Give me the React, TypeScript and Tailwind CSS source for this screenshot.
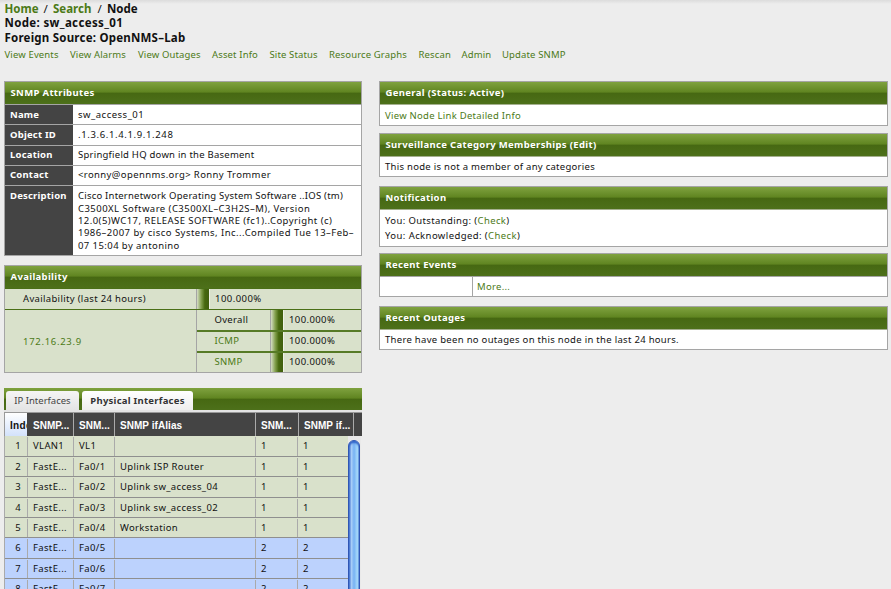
import type { ReactNode } from "react";
import { clsx } from "clsx";

const LINK = "text-[#4c7a17]";
const GLOSS =
  "bg-[linear-gradient(to_bottom,#7fa23f_0%,#5f8420_47%,#466812_49%,#4d701a_100%)]";

function PanelTitle({ children, className }: { children: ReactNode; className?: string }) {
  return (
    <h3
      className={clsx(
        "flex shrink-0 items-center pl-[5.5px] text-[9.5px] font-bold tracking-[0.34px] text-white",
        GLOSS,
        className,
      )}
    >
      {children}
    </h3>
  );
}

function Panel({
  title,
  className,
  bodyClassName = "pt-[1px]",
  children,
}: {
  title: string;
  className: string;
  bodyClassName?: string;
  children: ReactNode;
}) {
  return (
    <section className={clsx("flex flex-col border border-[#a5a5a5] bg-white", className)}>
      <PanelTitle className="h-[22px] pt-[1px]">{title}</PanelTitle>
      <div className={clsx("flex grow flex-col justify-center border-t border-[#a5b08f] pl-[5px]", bodyClassName)}>
        {children}
      </div>
    </section>
  );
}

const menu = [
  { label: "View Events", width: "w-[65.5px]" },
  { label: "View Alarms", width: "w-[68px]" },
  { label: "View Outages", width: "w-[74px]" },
  { label: "Asset Info", width: "w-[57.5px]" },
  { label: "Site Status", width: "w-[59.5px]" },
  { label: "Resource Graphs", width: "w-[89.5px]" },
  { label: "Rescan", width: "w-[43px]" },
  { label: "Admin", width: "w-[40.5px]" },
  { label: "Update SNMP", width: "w-[70px]" },
];

const attributes = [
  { name: "Name", value: "sw_access_01", tracking: "tracking-[0.5px]" },
  { name: "Object ID", value: ".1.3.6.1.4.1.9.1.248", tracking: "tracking-[0.64px]" },
  { name: "Location", value: "Springfield HQ down in the Basement", tracking: "tracking-[0.24px]" },
  { name: "Contact", value: "<ronny@opennms.org> Ronny Trommer", tracking: "tracking-[0.39px]" },
];

const description = [
  { text: "Cisco Internetwork Operating System Software ..IOS (tm)", tracking: "tracking-[0.22px]" },
  { text: "C3500XL Software (C3500XL–C3H2S–M), Version", tracking: "tracking-[0.46px]" },
  { text: "12.0(5)WC17, RELEASE SOFTWARE (fc1)..Copyright (c)", tracking: "tracking-[0.44px]" },
  { text: "1986–2007 by cisco Systems, Inc...Compiled Tue 13–Feb–", tracking: "tracking-[0.47px]" },
  { text: "07 15:04 by antonino", tracking: "tracking-[0.42px]" },
];

const interfaces = [
  ["1", "VLAN1", "VL1", "", "1"],
  ["2", "FastE...", "Fa0/1", "Uplink ISP Router", "1"],
  ["3", "FastE...", "Fa0/2", "Uplink sw_access_04", "1"],
  ["4", "FastE...", "Fa0/3", "Uplink sw_access_02", "1"],
  ["5", "FastE...", "Fa0/4", "Workstation", "1"],
  ["6", "FastE...", "Fa0/5", "", "2"],
  ["7", "FastE...", "Fa0/6", "", "2"],
  ["8", "FastE...", "Fa0/7", "", "2"],
];

function Header() {
  return (
    <header className="flex h-[81px] flex-col bg-[linear-gradient(to_bottom,#dcdcdc_0px,#ededed_4px)] pl-[4.5px]">
      <div className="pt-[2px] text-[11.5px] leading-[14.3px] font-bold">
        <div className="flex tracking-[0px]">
          <a className={clsx("w-[39px]", LINK)}>Home</a>
          <span className="w-[9.5px] font-normal">/</span>
          <a className={clsx("w-[41.5px]", LINK)}>Search</a>
          <span className="w-[12.5px] pl-[3px] font-normal">/</span>
          <span>Node</span>
        </div>
        <p className="tracking-[0.35px]">Node: sw_access_01</p>
        <p className="tracking-[0.22px]">Foreign Source: OpenNMS–Lab</p>
      </div>
      <nav className="flex pt-[3px] leading-[14px] tracking-[0.14px]">
        {menu.map((m) => (
          <a key={m.label} className={clsx("shrink-0", LINK, m.width)}>
            {m.label}
          </a>
        ))}
      </nav>
    </header>
  );
}

function SnmpAttributes() {
  return (
    <section className="h-[175px] shrink-0 border border-[#a5a5a5] bg-white">
      <PanelTitle className="h-[22px] pt-[1px]">SNMP Attributes</PanelTitle>
      {attributes.map(({ name, value, tracking }) => (
        <div key={name} className="flex h-[20.3px] border-t border-[#a5a5a5]">
          <div className="flex w-[68px] items-center bg-[#444] pl-[5px] text-[9.5px] font-bold tracking-[0.2px] text-white">
            {name}
          </div>
          <div className={clsx("flex items-center pl-[5px]", tracking)}>{value}</div>
        </div>
      ))}
      <div className="flex h-[69.8px] border-t border-[#a5a5a5]">
        <div className="w-[68px] bg-[#444] pt-[4px] pl-[5px] text-[9.5px] leading-[12.4px] font-bold tracking-[0.2px] text-white">
          Description
        </div>
        <div className="pt-[4px] pl-[5px] leading-[12.4px] whitespace-nowrap">
          {description.map(({ text, tracking }) => (
            <p key={text} className={tracking}>
              {text}
            </p>
          ))}
        </div>
      </div>
    </section>
  );
}

const BAR = "bg-[linear-gradient(to_right,#d5ddc5_0%,#83a04e_35%,#46680f_65%,#405f0e_100%)]";

function Availability() {
  return (
    <section className="mt-[9px] flex h-[108px] shrink-0 flex-col border border-[#a5a5a5] bg-[#d9e1cb]">
      <PanelTitle className="h-[22px]">Availability</PanelTitle>
      <div className="flex h-[21px] border-t border-[#4a6f17]">
        <div className="flex w-[192px] items-center border-r border-[#a5a5a5] pt-[1px] pl-[18px] tracking-[0.33px]">
          Availability (last 24 hours)
        </div>
        <div className={clsx("w-[12px]", BAR)} />
        <div className="flex items-center border-l border-[#eef2e6] pt-[1px] pl-[5px] tracking-[0.45px]">100.000%</div>
      </div>
      <div className="flex grow border-t border-[#4a6f17]">
        <div
          className={clsx(
            "flex w-[192px] items-center border-r border-[#a5a5a5] pt-[2px] pl-[18px] tracking-[0.7px]",
            LINK,
          )}
        >
          172.16.23.9
        </div>
        <div className="flex grow flex-col">
          {["Overall", "ICMP", "SNMP"].map((name, i) => (
            <div
              key={name}
              className={clsx("flex shrink-0", i > 0 ? "h-[21px] border-t-2 border-[#567a26]" : "h-[20px]")}
            >
              <div
                className={clsx(
                  "flex w-[74px] items-center border-r border-[#a5a5a5] pl-[17.5px]",
                  i > 0 ? LINK : "pt-[1px]",
                )}
              >
                {name}
              </div>
              <div className={clsx("w-[12px]", BAR)} />
              <div
                className={clsx(
                  "flex items-center border-l border-[#eef2e6] pl-[5px] tracking-[0.4px]",
                  i === 0 && "pt-[1px]",
                )}
              >
                100.000%
              </div>
            </div>
          ))}
        </div>
      </div>
    </section>
  );
}

function Interfaces() {
  return (
    <section className="mt-[15px] flex grow flex-col overflow-hidden">
      <div className={clsx("flex h-[22px] shrink-0 items-end gap-[3px] pl-[2px]", GLOSS)}>
        <div className="flex h-[19px] w-[73px] items-center justify-center rounded-t-[3px] bg-gradient-to-b from-[#f5f5f5] to-[#e4e4e4] pt-[1px] tracking-[0px] text-[#444]">
          IP Interfaces
        </div>
        <div className="flex h-[19px] w-[111px] items-center justify-center rounded-t-[3px] bg-gradient-to-b from-white to-[#eeeeee] pt-[1px] font-bold tracking-[0.25px] text-[#333]">
          Physical Interfaces
        </div>
      </div>
      <div className="h-[3px] shrink-0 border-b border-[#999] bg-[#e4e4e4]" />
      <div className="flex h-[23px] shrink-0 bg-[#444] font-['Liberation_Sans',sans-serif] text-[10px] font-bold text-white">
        <div className="grid w-[350px] grid-cols-[23px_46px_41px_141px_43px_55px] border-r border-[#aaa]">
          <div className="flex items-center overflow-hidden border-l border-[#999] bg-gradient-to-b from-white to-[#d3e2fb] pt-[1px] pl-[5px] whitespace-nowrap text-[#111]">
            Index
          </div>
          {["SNMP...", "SNM...", "SNMP ifAlias", "SNM...", "SNMP if..."].map((h, i) => (
            <div
              key={i}
              className={clsx(
                "flex items-center pt-[1px] tracking-[0.05px]",
                i > 0 ? "border-l border-[#aaa] pl-[5px]" : "pl-[6px]",
              )}
            >
              {h}
            </div>
          ))}
        </div>
      </div>
      <div className="flex grow overflow-hidden">
        <div className="w-[344px] shrink-0 border-l border-[#aaa]">
          {interfaces.map(([id, descr, name, alias, num], r) => (
            <div
              key={id}
              className={clsx(
                "grid w-[343px] grid-cols-[23px_46px_41px_141px_42px_50px] overflow-hidden border-b border-[#8f8f8f] pt-[1px] tracking-[0.35px] whitespace-nowrap",
                r === 0 ? "h-[21px]" : "h-[20.33px]",
                r < 5 ? "bg-[#d9e1cb]" : "bg-[#bcd2fd]",
              )}
            >
              <div className="flex items-center justify-end border-r border-[#aaa] pr-[6px]">{id}</div>
              {[descr, name, alias, num, num].map((cell, c) => (
                <div key={c} className={clsx("flex items-center pl-[5px]", c < 4 && "border-r border-[#aaa]")}>
                  {cell}
                </div>
              ))}
            </div>
          ))}
        </div>
        <div className="w-[13px] shrink-0 bg-[#e9e9e9] pt-[4px]">
          <div className="h-[170px] w-[12px] rounded-t-[6px] border border-[#2f56b5] bg-[linear-gradient(to_right,#4773cf_0%,#a6ccf7_25%,#76b1f3_50%,#a9dbfb_85%,#6f9edb_100%)] shadow-[inset_0_2px_2px_#2f62c8]" />
        </div>
      </div>
    </section>
  );
}

export default function App() {
  return (
    <div className="h-[589px] w-[891px] overflow-hidden bg-[#ededed] font-['Noto_Sans',sans-serif] text-[9.5px] tracking-[0.3px] text-[#111]">
      <Header />
      <main className="flex h-[508px] items-start gap-[17px] pl-[4px]">
        <div className="flex h-full w-[358px] flex-col">
          <SnmpAttributes />
          <Availability />
          <Interfaces />
        </div>
        <div className="w-[509px]">
          <Panel title="General (Status: Active)" className="h-[45px]" bodyClassName="pt-[2px]">
            <a className={clsx("tracking-[0.27px]", LINK)}>View Node Link Detailed Info</a>
          </Panel>
          <Panel title="Surveillance Category Memberships (Edit)" className="mt-[7px] h-[44px]">
            <p className="tracking-[0.28px]">This node is not a member of any categories</p>
          </Panel>
          <Panel title="Notification" className="mt-[9px] h-[61px]" bodyClassName="pb-[1px]">
            <p className="leading-[15px] tracking-[0.38px]">
              You: Outstanding: (<a className={LINK}>Check</a>)
            </p>
            <p className="leading-[15px] tracking-[0.42px]">
              You: Acknowledged: (<a className={LINK}>Check</a>)
            </p>
          </Panel>
          <section className="mt-[6px] h-[44px] border border-[#a5a5a5] bg-white">
            <PanelTitle className="h-[22px] pt-[1px]">Recent Events</PanelTitle>
            <div className="flex h-[20px] border-t border-[#a5a5a5]">
              <div className="w-[93px] border-r border-[#a5a5a5]" />
              <a className={clsx("flex items-center pt-[1px] pl-[4px]", LINK)}>More...</a>
            </div>
          </section>
          <Panel title="Recent Outages" className="mt-[9px] h-[44px]">
            <p>There have been no outages on this node in the last 24 hours.</p>
          </Panel>
        </div>
      </main>
    </div>
  );
}
